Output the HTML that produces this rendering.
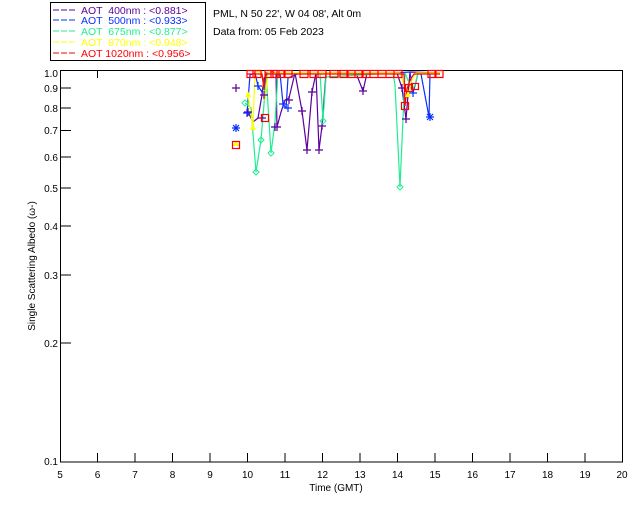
<!DOCTYPE html>
<html><head><meta charset="utf-8"><style>
html,body{margin:0;padding:0;background:#fff;}
svg{display:block;font-family:"Liberation Sans",sans-serif;}
</style></head><body>
<svg width="640" height="512" viewBox="0 0 640 512" xmlns="http://www.w3.org/2000/svg">
<rect width="640" height="512" fill="#fff"/>
<!-- legend -->
<rect x="50.5" y="2.5" width="155" height="58" fill="none" stroke="#000" stroke-width="1"/>
<g font-size="10.5">
<line x1="53" y1="10" x2="77" y2="10" stroke="#5a00a0" stroke-dasharray="6,2"/>
<text x="81" y="14" fill="#5a00a0" xml:space="preserve">AOT  400nm : &lt;0.881&gt;</text>
<line x1="53" y1="20" x2="77" y2="20" stroke="#0a30ff" stroke-dasharray="6,2"/>
<text x="81" y="24" fill="#0a30ff" xml:space="preserve">AOT  500nm : &lt;0.933&gt;</text>
<line x1="53" y1="31" x2="77" y2="31" stroke="#20ee90" stroke-dasharray="6,2"/>
<text x="81" y="35" fill="#20ee90" xml:space="preserve">AOT  675nm : &lt;0.877&gt;</text>
<line x1="53" y1="42" x2="77" y2="42" stroke="#ffff00" stroke-dasharray="6,2"/>
<text x="81" y="46" fill="#ffff00" xml:space="preserve">AOT  870nm : &lt;0.948&gt;</text>
<line x1="53" y1="53" x2="77" y2="53" stroke="#ff0000" stroke-dasharray="6,2"/>
<text x="81" y="57" fill="#ff0000" xml:space="preserve">AOT 1020nm : &lt;0.956&gt;</text>
</g>
<text x="213" y="17" font-size="10.5">PML, N 50 22', W 04 08', Alt 0m</text>
<text x="213" y="35" font-size="10.5">Data from: 05 Feb 2023</text>

<!-- axes -->
<rect x="60.5" y="70.5" width="562" height="391.5" fill="none" stroke="#000"/>
<g stroke="#000">
<line x1="97.5" y1="462" x2="97.5" y2="453"/><line x1="135" y1="462" x2="135" y2="453"/>
<line x1="172.5" y1="462" x2="172.5" y2="453"/><line x1="210" y1="462" x2="210" y2="453"/>
<line x1="247.5" y1="462" x2="247.5" y2="453"/><line x1="285" y1="462" x2="285" y2="453"/>
<line x1="322.5" y1="462" x2="322.5" y2="453"/><line x1="360" y1="462" x2="360" y2="453"/>
<line x1="397.5" y1="462" x2="397.5" y2="453"/><line x1="435" y1="462" x2="435" y2="453"/>
<line x1="472.5" y1="462" x2="472.5" y2="453"/><line x1="510" y1="462" x2="510" y2="453"/>
<line x1="547.5" y1="462" x2="547.5" y2="453"/><line x1="585" y1="462" x2="585" y2="453"/>
<line x1="97.5" y1="70" x2="97.5" y2="78"/>
<line x1="60" y1="88" x2="71" y2="88"/><line x1="60" y1="108" x2="71" y2="108"/>
<line x1="60" y1="130.5" x2="71" y2="130.5"/><line x1="60" y1="157" x2="71" y2="157"/>
<line x1="60" y1="188" x2="71" y2="188"/><line x1="60" y1="226" x2="71" y2="226"/>
<line x1="60" y1="275" x2="71" y2="275"/><line x1="60" y1="343" x2="71" y2="343"/>
</g>
<g font-size="10" text-anchor="end">
<text x="58" y="77">1.0</text><text x="58" y="92">0.9</text><text x="58" y="112">0.8</text>
<text x="58" y="134">0.7</text><text x="58" y="161">0.6</text><text x="58" y="192">0.5</text>
<text x="58" y="230">0.4</text><text x="58" y="279">0.3</text><text x="58" y="347">0.2</text>
<text x="58" y="465">0.1</text>
</g>
<g font-size="10" text-anchor="middle">
<text x="60" y="478">5</text><text x="97.5" y="478">6</text><text x="135" y="478">7</text>
<text x="172.5" y="478">8</text><text x="210" y="478">9</text><text x="247.5" y="478">10</text>
<text x="285" y="478">11</text><text x="322.5" y="478">12</text><text x="360" y="478">13</text>
<text x="397.5" y="478">14</text><text x="435" y="478">15</text><text x="472.5" y="478">16</text>
<text x="510" y="478">17</text><text x="547.5" y="478">18</text><text x="585" y="478">19</text>
<text x="622" y="478">20</text>
<text x="336" y="491">Time (GMT)</text>
</g>
<text transform="translate(35,266) rotate(-90)" font-size="10" text-anchor="middle">Single Scattering Albedo (ω-)</text>

<!-- data -->
<g fill="none" stroke-width="1.2">
<polyline stroke="#5a00a0" points="248,112 253,122 258,118 262,95 264,78 268,74 272,72 276,73 277,127 281,112 285,100 289,98 295,73 302,111 307,150 312,92 316,73 319,150 322,126 326,73 356,73 363,91 367,73 397,73 402,88 406,119 410,72 440,73"/>
<polyline stroke="#0a30ff" points="247,113 250,75 255,73 258,86 262,92 266,73 280,73 283,104 286,108 288,78 300,73 394,73 410,72 413,93 416,82 418,73 421,74 429,117 430,73 440,74"/>
<polyline stroke="#20ee90" points="245,103 251,108 256,172 261,140 264,104 266,73 271,153 275,122 278,73 320,73 323,121 326,77 393,73 395,85 400,187 405,73 412,90 415,85 418,73 440,73"/>
<polyline stroke="#ffff00" points="248,95 253,128 255,72 262,72 265,100 268,73 400,73 404,85 408,95 412,80 416,73 440,73"/>
<polyline stroke="#ff0000" points="247,74 262,74 264,90 266,74 404,74 405,106 407,89 410,80 414,74 440,74"/>
</g>
<g stroke="#5a00a0" stroke-width="1.2">
<path d="M232,88h8M236,84v8 M244,112h8M248,108v8 M258,118h8M262,114v8 M260,95h8M264,91v8 M273,127h8M277,123v8 M285,100h8M289,96v8 M298,111h8M302,107v8 M303,150h8M307,146v8 M308,92h8M312,88v8 M315,150h8M319,146v8 M318,126h8M322,122v8 M359,91h8M363,87v8 M402,119h8M406,115v8 M398,88h8M402,84v8 M271,127h8M275,123v8"/>
</g>
<g stroke="#0a30ff" stroke-width="1.2">
<path d="M232,128h8M236,124v8M233,125l6,6M239,125l-6,6 M426,117h8M430,113v8M427,114l6,6M433,114l-6,6 M243,113h8M247,109v8 M279,104h8M283,100v8 M284,108h8M288,104v8 M254,86h8M258,82v8 M409,93h8M413,89v8"/>
</g>
<g stroke="#20ee90" fill="none" stroke-width="1">
<path d="M256,169l3,3l-3,3l-3,-3z M261,137l3,3l-3,3l-3,-3z M271,150l3,3l-3,3l-3,-3z M400,184l3,3l-3,3l-3,-3z M323,118l3,3l-3,3l-3,-3z M245,100l3,3l-3,3l-3,-3z"/>
</g>
<g fill="#ffff00">
<path d="M248,91l3,6h-6z M253,124l3,6h-6z M408,91l3,6h-6z M236,140l3,6h-6z"/>
</g>
<g stroke="#ff0000" fill="none" stroke-width="1.2">
<rect x="232.5" y="141.5" width="7" height="7"/>
<rect x="261.5" y="114.5" width="7" height="7"/>
<rect x="401.5" y="102.5" width="7" height="7"/>
<rect x="405.5" y="84.5" width="7" height="7"/>
<rect x="411.5" y="83.5" width="7" height="6"/>
<path d="M247,70.5h8v7h-8z M253,70.5h8v7h-8z M265,70.5h8v7h-8z M271,70.5h8v7h-8z M277,70.5h8v7h-8z M284,70.5h8v7h-8z M300,70.5h8v7h-8z M310,70.5h8v7h-8z M318,70.5h8v7h-8z M330,70.5h8v7h-8z M340,70.5h8v7h-8z M347,70.5h8v7h-8z M355,70.5h8v7h-8z M362,70.5h8v7h-8z M370,70.5h8v7h-8z M378,70.5h8v7h-8z M386,70.5h8v7h-8z M394,70.5h8v7h-8z M428,70.5h8v7h-8z M435,70.5h8v7h-8z"/>
</g>
</svg>
</body></html>
